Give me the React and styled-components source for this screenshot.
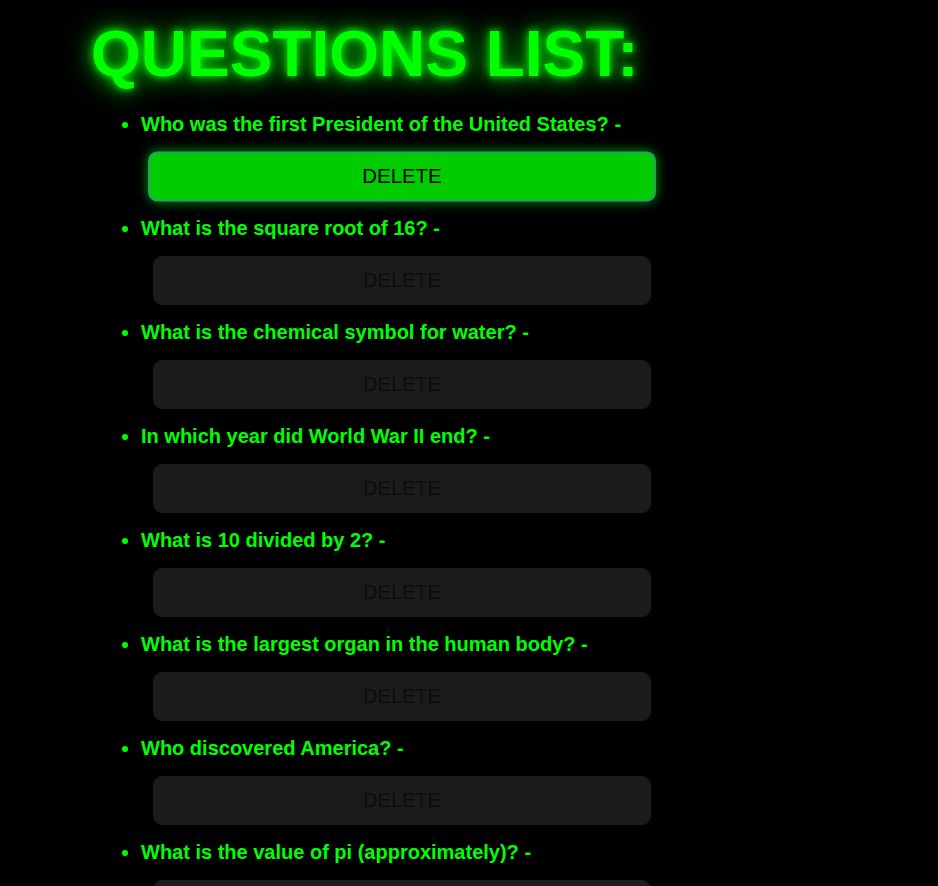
import React from 'react'
import styled, { createGlobalStyle } from 'styled-components'

const GlobalStyle = createGlobalStyle`
  body {
    margin: 8px;
    background: #000;
    font-family: "Liberation Sans", Arial, sans-serif;
  }
`

const questions = [
  'Who was the first President of the United States?',
  'What is the square root of 16?',
  'What is the chemical symbol for water?',
  'In which year did World War II end?',
  'What is 10 divided by 2?',
  'What is the largest organ in the human body?',
  'Who discovered America?',
  'What is the value of pi (approximately)?',
]

const Page = styled.div`
  padding-left: 83px;
`

const Title = styled.h1`
  margin: 9px 0 0;
  font-size: 64px;
  line-height: 74px;
  font-weight: 700;
  color: #00ff00;
  text-shadow: 0 0 8px #00ff00, 0 0 20px rgba(0, 255, 0, 0.7),
    0 0 34px rgba(0, 255, 0, 0.5);
`

const List = styled.ul`
  margin: 22px 0 0 10px;
  padding-left: 40px;
  color: #00ff00;
`

const Item = styled.li`
  font-size: 20px;
  line-height: 23px;
  font-weight: 700;
`

const DeleteButton = styled.button`
  display: block;
  box-sizing: border-box;
  width: 498px;
  height: 49px;
  margin: 16px 0 16px 12px;
  padding: 0;
  font-family: "Liberation Sans", Arial, sans-serif;
  font-size: 20px;
  font-weight: 400;
  color: ${({ $active }) => ($active ? '#000' : '#0c0c0c')};
  background: ${({ $active }) => ($active ? '#00cc00' : '#1b1b1b')};
  border: 1px solid ${({ $active }) => ($active ? '#5a6fd6' : '#1b1b1b')};
  border-radius: 9px;
  box-shadow: ${({ $active }) => ($active ? '0 0 10px rgba(0, 255, 0, 0.6)' : 'none')};
  transform: ${({ $active }) => ($active ? 'scale(1.02)' : 'none')};
  cursor: pointer;
`

const App = () => {
  return (
    <>
      <GlobalStyle />
      <Page>
        <Title>QUESTIONS LIST:</Title>
        <List>
          {questions.map((q, i) => (
            <Item key={q}>
              {q} -
              <DeleteButton $active={i === 0}>DELETE</DeleteButton>
            </Item>
          ))}
        </List>
      </Page>
    </>
  )
}

export default App
